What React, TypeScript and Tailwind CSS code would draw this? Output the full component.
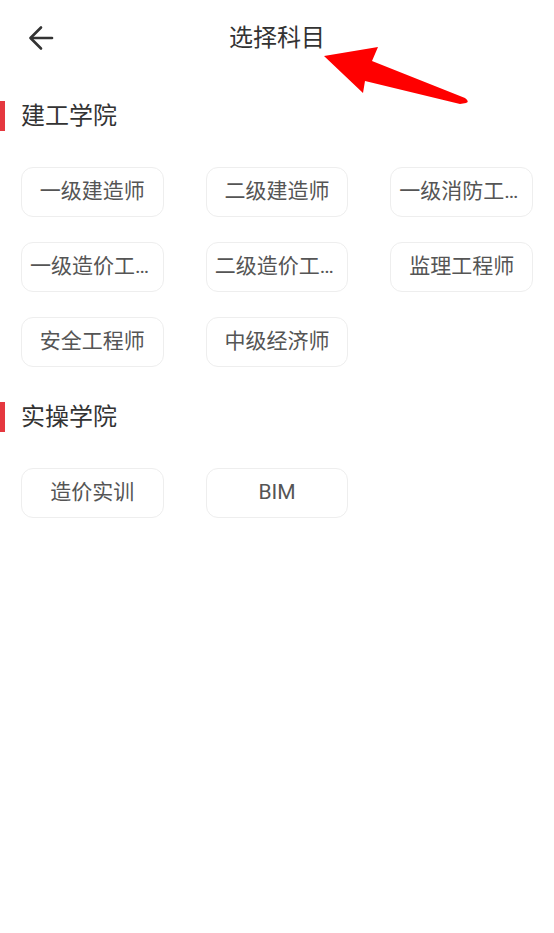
import React from 'react'

const sections = [
  {
    title: '建工学院',
    items: ['一级建造师', '二级建造师', '一级消防工程师', '一级造价工程师', '二级造价工程师', '监理工程师', '安全工程师', '中级经济师'],
  },
  {
    title: '实操学院',
    items: ['造价实训', 'BIM'],
  },
]

export default function App() {
  return (
    <div
      className="relative w-[554px] h-[933px] bg-white text-[#333]"
      style={{ fontFamily: 'Roboto, "Noto Sans CJK SC", sans-serif' }}
    >
      {/* header */}
      <div className="relative flex h-[76px] items-center justify-center">
        <button className="absolute left-[26px] top-[23px] flex h-[30px] w-[30px] items-center justify-center">
          <svg width="28" height="28" viewBox="0 0 28 28" fill="none" stroke="#333" strokeWidth="2.6" strokeLinecap="round" strokeLinejoin="round">
            <path d="M25 14H4" />
            <path d="M14 3.5L3.5 14L14 24.5" />
          </svg>
        </button>
        <h1 className="text-[24px] font-normal text-[#333]">选择科目</h1>
      </div>

      {/* annotation arrow */}
      <svg className="absolute left-0 top-0 pointer-events-none" width="554" height="120" viewBox="0 0 554 120">
        <path
          d="M324 56 L378 47 L372 61 L465 98 Q470 102 466 103 L460 104 L365 81 L363 93 Z"
          fill="#ff0000"
        />
      </svg>

      <div className="pt-[25px]">
        {sections.map((section) => (
          <div key={section.title} className="mb-[35px]">
            <div className="flex h-[30px] items-center">
              <div className="h-[30px] w-[5px] bg-[#e5383f]" />
              <span className="ml-[16px] text-[24px] leading-none text-[#333]">{section.title}</span>
            </div>
            <div className="mt-[36px] grid grid-cols-3 gap-x-[42px] gap-y-[25px] px-[21px]">
              {section.items.map((item) => (
                <div
                  key={item}
                  className="flex h-[50px] items-center justify-center rounded-[12px] border border-[#eeeeee] px-[8px]"
                >
                  <span className="overflow-hidden text-ellipsis whitespace-nowrap text-[21px] text-[#555]">{item}</span>
                </div>
              ))}
            </div>
          </div>
        ))}
      </div>
    </div>
  )
}
